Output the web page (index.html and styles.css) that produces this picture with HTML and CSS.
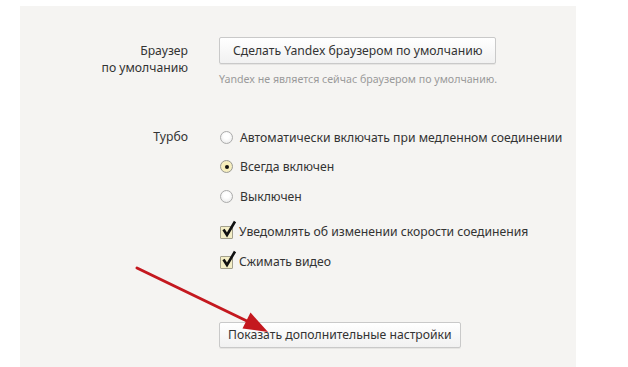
FILE: index.html
```html
<!DOCTYPE html>
<html lang="ru">
<head>
<meta charset="utf-8">
<link rel="stylesheet" href="styles.css">
</head>
<body>
<div class="panel">
  <section class="row default-row">
    <div class="label two-line">Браузер<br>по умолчанию</div>
    <div class="content">
      <button class="btn">Сделать Yandex браузером по умолчанию</button>
      <div class="hint">Yandex не является сейчас браузером по умолчанию.</div>
    </div>
  </section>

  <section class="row turbo-row">
    <div class="label">Турбо</div>
    <div class="content">
      <div class="opt radio-opt"><span class="radio"></span>Автоматически включать при медленном соединении</div>
      <div class="opt radio-opt"><span class="radio checked"></span>Всегда включен</div>
      <div class="opt radio-opt"><span class="radio"></span>Выключен</div>
      <div class="checks">
        <div class="opt check-opt"><span class="check"><svg viewBox="0 0 16 18" width="16" height="18"><path d="M2.5 9.5 L6 15 L14 1.5" fill="none" stroke="#111" stroke-width="2.6" stroke-linejoin="miter" stroke-linecap="butt"/></svg></span>Уведомлять об изменении скорости соединения</div>
        <div class="opt check-opt"><span class="check"><svg viewBox="0 0 16 18" width="16" height="18"><path d="M2.5 9.5 L6 15 L14 1.5" fill="none" stroke="#111" stroke-width="2.6" stroke-linejoin="miter" stroke-linecap="butt"/></svg></span>Сжимать видео</div>
      </div>
    </div>
  </section>

  <section class="row more-row">
    <div class="label"></div>
    <div class="content">
      <button class="btn btn-more">Показать дополнительные настройки</button>
    </div>
  </section>
</div>

<svg class="arrow" width="628" height="367" viewBox="0 0 628 367">
  <line x1="137" y1="268" x2="250" y2="322.5" stroke="#c4181f" stroke-width="3" stroke-linecap="round"/>
  <polygon points="268,332 242.5,328.5 250.5,312.5" fill="#c4181f"/>
</svg>
</body>
</html>
```

FILE: styles.css
```css
html, body {
  margin: 0;
  padding: 0;
  background: #ffffff;
}

body {
  font-family: "Noto Sans", "Open Sans", sans-serif;
  font-size: 12.2px;
  color: #333333;
  position: relative;
  width: 628px;
  height: 367px;
  overflow: hidden;
}

.panel {
  margin: 6px 0 0 20px;
  width: 556px;
  height: 361px;
  background: #f5f4f2;
  box-sizing: border-box;
}

.row {
  display: grid;
  grid-template-columns: 168px 1fr;
  column-gap: 31px;
}

.label {
  text-align: right;
  line-height: 17px;
}

.default-row {
  padding-top: 31px;
}

.two-line {
  padding-top: 5px;
}

.content {
  display: flex;
  flex-direction: column;
  align-items: flex-start;
}

.btn {
  font-family: inherit;
  font-size: 12.2px;
  color: #333333;
  height: 27px;
  padding: 0 13px;
  border: 1px solid #c9c9c9;
  border-radius: 2px;
  background: linear-gradient(#ffffff, #f1f1f1);
  box-shadow: 0 1px 0 rgba(0, 0, 0, 0.06);
  line-height: 25px;
  margin: 0;
  cursor: default;
}

.hint {
  margin-top: 8px;
  line-height: 14px;
  font-size: 10.65px;
  color: #9a9a9a;
}

.turbo-row {
  padding-top: 36px;
}

.turbo-row .label {
  line-height: 30px;
}

.opt {
  display: flex;
  align-items: center;
  white-space: nowrap;
}

.radio-opt {
  height: 29.5px;
}

.radio-opt:first-child {
  height: 30px;
}

.radio {
  width: 13px;
  height: 13px;
  box-sizing: border-box;
  border-radius: 50%;
  border: 1px solid #ababab;
  background: radial-gradient(circle at 50% 40%, #ffffff 30%, #e4e4e4 100%);
  margin: 0 7px 0 1px;
  flex: none;
  position: relative;
}

.radio.checked {
  background: radial-gradient(circle, #f3eaa8 0%, #f7efc0 55%, #e8e1c0 100%);
  border-color: #9a9a90;
}

.radio.checked::after {
  content: "";
  position: absolute;
  left: 3.5px;
  top: 3.5px;
  width: 4px;
  height: 4px;
  border-radius: 50%;
  background: #111111;
}

.checks {
  margin-top: 5px;
}

.check-opt {
  height: 30px;
}

.check {
  width: 13px;
  height: 13px;
  box-sizing: border-box;
  border: 1px solid #a3a08c;
  border-radius: 1px;
  background: #f4eec6;
  margin: 2px 6px 0 1px;
  flex: none;
  position: relative;
}

.check svg {
  position: absolute;
  left: 0px;
  top: -7px;
}

.more-row {
  padding-top: 46px;
}

.btn-more {
  height: 26px;
  line-height: 24px;
  padding: 0 8px;
}

.arrow {
  position: absolute;
  left: 0;
  top: 0;
  pointer-events: none;
}
```
